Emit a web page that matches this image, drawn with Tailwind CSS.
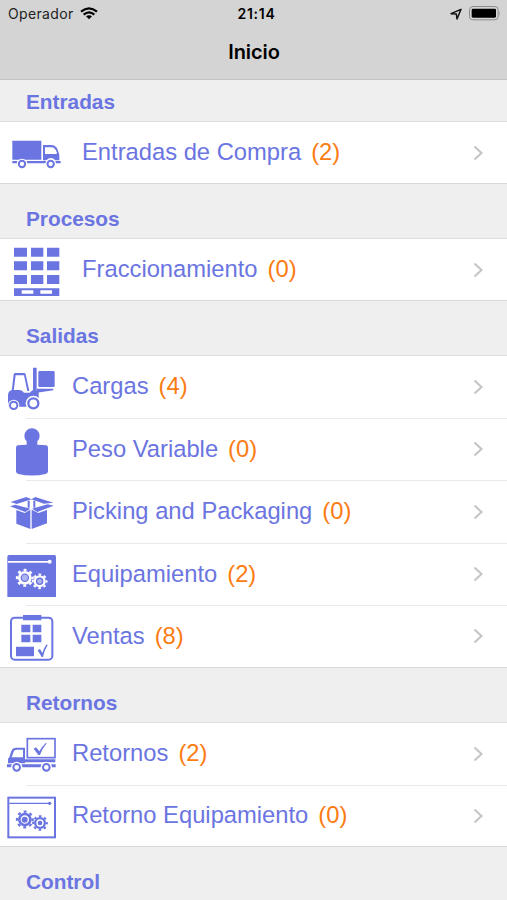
<!DOCTYPE html>
<html lang="es">
<head>
<meta charset="utf-8">
<meta name="viewport" content="width=device-width, initial-scale=1">
<title>Inicio</title>
<script src="https://cdn.jsdelivr.net/npm/@tailwindcss/browser@4"></script>
</head>
<body class="w-[507px] h-[900px] overflow-hidden bg-white font-['Liberation_Sans',Arial,sans-serif] text-[#6b75e1]">
<svg class="hidden">
  <symbol id="chevron" viewBox="0 0 12 18"><path d="M2.500 2.500 9.500 9 2.500 15.500" fill="none" stroke="#c5c5c9" stroke-width="2.1"/></symbol>
  <symbol id="gear" viewBox="-28 -28 56 56" overflow="visible">
    <circle r="17" fill="none" stroke="currentColor" stroke-width="8"/>
    <circle r="24" fill="none" stroke="currentColor" stroke-width="7" stroke-dasharray="9 9.85" stroke-dashoffset="4.5"/>
  </symbol>
</svg>
<header class="h-20 bg-[#d4d4d4] border-b border-[#c2c2c2] text-black font-['Inter',sans-serif]">
  <div class="grid grid-cols-3 h-[27px] items-center pl-2 pr-[6px] leading-none">
    <div class="flex items-center gap-[6px] text-[#222]">
      <span class="w-[66px] whitespace-nowrap text-[14px] tracking-[0.35px]">Operador</span>
      <svg class="w-[18px] h-[13px]" viewBox="0 0 54 39" fill="none" stroke="#000" stroke-width="6.5"><path d="M3 14Q27-6 51 14M11 23Q27 9 43 23"/><path d="M18 28Q27 21 36 28L27 37Z" fill="#000" stroke="none"/></svg>
    </div>
    <div class="text-center font-semibold text-[14px] tracking-[0.7px] pl-[4px]">21:14</div>
    <div class="flex items-center justify-end gap-[7px]">
      <svg class="w-[12px] h-[12px]" viewBox="0 0 36 36"><path d="M3 17 33 4 21 33 19 18Z" fill="none" stroke="#111" stroke-width="4.5" stroke-linejoin="round"/></svg>
      <svg class="w-[32px] h-[15px]" viewBox="0 0 96 45"><rect x="1.5" y="1.5" width="86" height="40" rx="10" fill="none" stroke="#8d8d8d" stroke-width="3"/><rect x="8" y="8" width="73" height="27" rx="4"/><path d="M91 15q5 7 0 14Z" fill="#8d8d8d"/></svg>
    </div>
  </div>
  <h1 class="text-center font-semibold text-[20px] leading-[50px] tracking-[-0.1px] pl-px">Inicio</h1>
</header>
<main class="text-[23.75px] leading-[30px]">
  <h2 class="h-[42px] bg-[#efeff0] border-b border-[#dedede] pl-[26px] pt-[8px] text-[20.8px] leading-[28px] font-bold">Entradas</h2>
  <div class="flex h-[62px] items-center border-b border-[#d8d8d8] pr-[23px]">
    <svg class="w-[82px] h-[62px] shrink-0" viewBox="0 -9 246 186" fill="currentColor">
      <path d="M37 47h87v57H37zM37 108h15a16 16 0 0 0 0 7H37zM80 108h58a16 16 0 0 0 0 7H80zM166 108h16v7h-16z"/>
      <path d="M129 60h25q13 0 19 14l5 15v17h-12q-13-14-27 0h-10zM135 67v20h31q7 0 4-6-5-14-16-14z" fill-rule="evenodd"/>
      <circle cx="66" cy="117" r="16" fill="white"/><circle cx="152" cy="117" r="16" fill="white"/>
      <g fill="white" stroke="currentColor" stroke-width="6"><circle cx="66" cy="117" r="9.5"/><circle cx="152" cy="117" r="9.5"/></g>
    </svg>
    <span class="flex-1 flex gap-[10px] pb-px"><span>Entradas de Compra</span><span class="text-[#fb7c12]">(2)</span></span>
    <svg class="w-[12px] h-[18px]"><use href="#chevron"/></svg>
  </div>
  <h2 class="h-[55px] bg-[#efeff0] border-b border-[#dedede] pl-[26px] pt-[21px] text-[20.8px] leading-[28px] font-bold">Procesos</h2>
  <div class="flex h-[62px] items-center border-b border-[#d8d8d8] pr-[23px]">
    <svg class="w-[82px] h-[62px] shrink-0" viewBox="0 3 246 186" fill="currentColor">
      <path d="M42 29h39v27H42zM93 29h37v27H93zM141 29h37v27h-37zM42 70h39v27H42zM93 70h37v27H93zM141 70h37v27h-37zM42 111h39v27H42zM93 111h37v27H93zM141 111h37v27h-37z"/>
      <path d="M42 151h136v23H42zM65 157v10h35v-10zM121 157v10h35v-10z" fill-rule="evenodd"/>
    </svg>
    <span class="flex-1 flex gap-[10px] pb-px"><span>Fraccionamiento</span><span class="text-[#fb7c12]">(0)</span></span>
    <svg class="w-[12px] h-[18px]"><use href="#chevron"/></svg>
  </div>
  <h2 class="h-[55px] bg-[#efeff0] border-b border-[#dedede] pl-[26px] pt-[21px] text-[20.8px] leading-[28px] font-bold">Salidas</h2>
  <div class="flex h-[62px] items-center pr-[23px]">
    <svg class="w-[72px] h-[62px] shrink-0" viewBox="0 3 216 186" fill="currentColor">
      <path d="M99 38h11v69h-11zM119 48h41q4 0 4 4v40q0 4-4 4h-41q-4 0-4-4V52q0-4 4-4zM111 101h49v5l-50 7z"/>
      <path d="M35 108 41 58q1-4 5-4h26q4 0 5 4l11 50h-6L72 61H47l-6 47z"/>
      <path d="M24 119q2-14 15-14h20q8 0 13 8h17l8-7h12q7 0 7 8v41H24z"/>
      <g fill="white"><circle cx="41" cy="151" r="17"/><circle cx="100" cy="145" r="23"/></g>
      <g fill="white" stroke="currentColor"><circle cx="41" cy="151" r="11" stroke-width="6"/><circle cx="100" cy="145" r="15" stroke-width="7"/></g>
    </svg>
    <span class="flex-1 flex gap-[10px] pb-[2px]"><span>Cargas</span><span class="text-[#fb7c12]">(4)</span></span>
    <svg class="w-[12px] h-[18px]"><use href="#chevron"/></svg>
  </div>
  <div class="ml-[26px] -mb-px h-px bg-[#e9e9ea]"></div>
  <div class="flex h-[62px] items-center pr-[23px]">
    <svg class="w-[72px] h-[62px] shrink-0" viewBox="0 -3 216 186" fill="currentColor">
      <path d="M80 67a23 23 0 1 1 32 0v10q20 0 28 2 4 2 4 7v71q0 6-7 8-41 9-82 0-7-2-7-8V86q0-5 4-7 8-2 28-2z"/>
    </svg>
    <span class="flex-1 flex gap-[10px] pb-px"><span>Peso Variable</span><span class="text-[#fb7c12]">(0)</span></span>
    <svg class="w-[12px] h-[18px]"><use href="#chevron"/></svg>
  </div>
  <div class="ml-[26px] h-px bg-[#e9e9ea]"></div>
  <div class="flex h-[62px] items-center pr-[23px]">
    <svg class="w-[72px] h-[62px] shrink-0" viewBox="0 0 216 186" fill="currentColor">
      <path d="M32 63 79 48l16 7-45 14zM160 65l-54-17-12 7 38 13zM30 76l16-5 45 12-15 10zM161 74l-18-4-47 13 16 10zM49 87l25 9 17-10v58l-42-16zM141 87l-26 9-20-10v58l46-17z"/>
      <path d="M86 59v21M103 59v21" fill="none" stroke="currentColor" stroke-width="6"/>
    </svg>
    <span class="flex-1 flex gap-[10px] pb-[2px]"><span>Picking and Packaging</span><span class="text-[#fb7c12]">(0)</span></span>
    <svg class="w-[12px] h-[18px]"><use href="#chevron"/></svg>
  </div>
  <div class="ml-[26px] -mb-px h-px bg-[#e9e9ea]"></div>
  <div class="flex h-[62px] items-center pr-[23px]">
    <svg class="w-[72px] h-[62px] shrink-0" viewBox="0 0 216 186" fill="currentColor">
      <path d="M27 36h136q5 0 5 5v121H22V41q0-5 5-5z"/>
      <g class="text-white"><path d="M24 54h122v5H24z"/><circle cx="149" cy="56" r="6"/>
      <use href="#gear" x="47" y="77" width="55" height="55"/><use href="#gear" x="95" y="91" width="48" height="48"/></g>
      <circle cx="74.500" cy="104.500" r="9" fill="#aeb4ef"/><circle cx="119" cy="115" r="7" fill="#aeb4ef"/>
    </svg>
    <span class="flex-1 flex gap-[10px] pb-px"><span>Equipamiento</span><span class="text-[#fb7c12]">(2)</span></span>
    <svg class="w-[12px] h-[18px]"><use href="#chevron"/></svg>
  </div>
  <div class="ml-[26px] -mb-px h-px bg-[#e9e9ea]"></div>
  <div class="flex h-[63px] items-center border-b border-[#d8d8d8] pr-[23px]">
    <svg class="w-[72px] h-[62px] shrink-0" viewBox="0 0 216 186" fill="currentColor">
      <rect x="33" y="38" width="124" height="126" rx="11" fill="none" stroke="currentColor" stroke-width="6"/>
      <path d="M69 30h55v16H69zM64 59h27v23H64zM98 59h26v23H98zM64 89h27v23H64zM98 89h26v23H98zM48 125h54v29H48z"/>
      <path d="M113 136l7-4 7 12q5-16 13-26l3 2q-11 18-14 36h-4z"/>
    </svg>
    <span class="flex-1 flex gap-[10px]"><span>Ventas</span><span class="text-[#fb7c12]">(8)</span></span>
    <svg class="w-[12px] h-[18px]"><use href="#chevron"/></svg>
  </div>
  <h2 class="h-[55px] bg-[#efeff0] border-b border-[#dedede] pl-[26px] pt-[21px] text-[20.8px] leading-[28px] font-bold">Retornos</h2>
  <div class="flex h-[62px] items-center pr-[23px]">
    <svg class="w-[72px] h-[62px] shrink-0" viewBox="0 9 216 186" fill="currentColor">
      <rect x="82" y="56" width="83" height="57" fill="none" stroke="currentColor" stroke-width="5"/>
      <path d="M101 86l7-4 10 12q8-15 20-26l2 2q-13 15-20 35h-5z"/>
      <path d="M75 83H49q-11 0-15 10l-6 19q-4 2-4 8v10h51zM69 89v23H35l6-17q2-6 8-6z" fill-rule="evenodd"/>
      <path d="M24 118h142v9H24zM21 133h146v9H21z"/>
      <g fill="white"><circle cx="50" cy="142" r="17"/><circle cx="139" cy="142" r="17"/></g>
      <g fill="white" stroke="currentColor" stroke-width="6"><circle cx="50" cy="142" r="10"/><circle cx="139" cy="142" r="10"/></g>
    </svg>
    <span class="flex-1 flex gap-[10px] pb-[2px]"><span>Retornos</span><span class="text-[#fb7c12]">(2)</span></span>
    <svg class="w-[12px] h-[18px]"><use href="#chevron"/></svg>
  </div>
  <div class="ml-[26px] -mb-px h-px bg-[#e9e9ea]"></div>
  <div class="flex h-[62px] items-center border-b border-[#d8d8d8] pr-[23px]">
    <svg class="w-[72px] h-[62px] shrink-0" viewBox="0 3 216 186" fill="currentColor">
      <rect x="25" y="41" width="140" height="119" fill="none" stroke="currentColor" stroke-width="6"/>
      <path d="M28 56h120v4H28z"/><circle cx="149" cy="58" r="5"/>
      <use href="#gear" x="47" y="79" width="55" height="55"/><use href="#gear" x="96" y="93" width="48" height="48"/>
      <circle cx="74" cy="107" r="9"/><circle cx="120" cy="117" r="7"/>
    </svg>
    <span class="flex-1 flex gap-[10px] pb-px"><span>Retorno Equipamiento</span><span class="text-[#fb7c12]">(0)</span></span>
    <svg class="w-[12px] h-[18px]"><use href="#chevron"/></svg>
  </div>
  <h2 class="h-[55px] bg-[#efeff0] pl-[26px] pt-[21px] text-[20.8px] leading-[28px] font-bold">Control</h2>
</main>
</body>
</html>
